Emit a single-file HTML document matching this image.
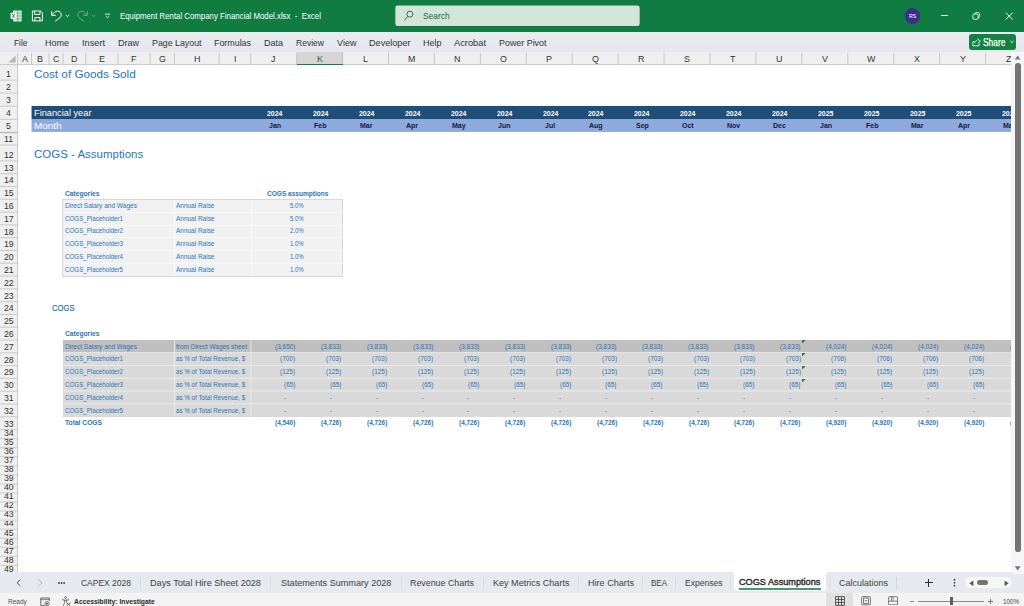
<!DOCTYPE html>
<html><head><meta charset="utf-8"><title>Excel</title>
<style>
html,body{margin:0;padding:0;background:#fff;}
body{width:1024px;height:606px;overflow:hidden;position:relative;font-family:"Liberation Sans",sans-serif;}
#r{position:absolute;left:0;top:0;width:1024px;height:606px;overflow:hidden;}
#r div,#r span,#r svg{position:absolute;}
#r span{white-space:pre;transform-origin:0 50%;}
</style></head><body><div id="r">
<div style="left:0.00px;top:0.00px;width:1024.00px;height:32.00px;background:#107c41;"></div>
<svg style="left:390px;top:0" width="256" height="32" viewBox="390 0 256 32"><rect x="395.3" y="5.9" width="244.4" height="20.6" rx="2.4" fill="#0d6b38"/><rect x="395.3" y="5.5" width="244.4" height="20.6" rx="2.4" fill="#d2e5d9"/></svg>
<span style="left:422.80px;top:9.84px;font-size:9.6px;line-height:11.52px;color:#21693f;transform:scaleX(0.8746);">Search</span>
<span style="left:120.00px;top:10.24px;font-size:9.6px;line-height:11.52px;color:#ffffff;transform:scaleX(0.8154);">Equipment Rental Company Financial Model.xlsx  -  Excel</span>
<div style="left:904.60px;top:8.00px;width:15.80px;height:15.80px;background:#3e2f86;border-radius:50%;"></div>
<span style="left:909.00px;top:12.38px;font-size:6.2px;line-height:7.44px;color:#ffffff;transform:scaleX(0.8475);">RS</span>
<div style="left:0.00px;top:32.00px;width:1024.00px;height:19.90px;background:linear-gradient(#e9ebf1,#e5e7ed);"></div>
<span style="left:14.00px;top:37.02px;font-size:9.8px;line-height:11.76px;color:#333333;transform:scaleX(0.8550);">File</span>
<span style="left:45.00px;top:37.02px;font-size:9.8px;line-height:11.76px;color:#333333;transform:scaleX(0.9181);">Home</span>
<span style="left:82.00px;top:37.02px;font-size:9.8px;line-height:11.76px;color:#333333;transform:scaleX(0.9385);">Insert</span>
<span style="left:117.50px;top:37.02px;font-size:9.8px;line-height:11.76px;color:#333333;transform:scaleX(0.9183);">Draw</span>
<span style="left:151.50px;top:37.02px;font-size:9.8px;line-height:11.76px;color:#333333;transform:scaleX(0.8995);">Page Layout</span>
<span style="left:214.00px;top:37.02px;font-size:9.8px;line-height:11.76px;color:#333333;transform:scaleX(0.9060);">Formulas</span>
<span style="left:263.50px;top:37.02px;font-size:9.8px;line-height:11.76px;color:#333333;transform:scaleX(0.9179);">Data</span>
<span style="left:295.50px;top:37.02px;font-size:9.8px;line-height:11.76px;color:#333333;transform:scaleX(0.8714);">Review</span>
<span style="left:336.50px;top:37.02px;font-size:9.8px;line-height:11.76px;color:#333333;transform:scaleX(0.9258);">View</span>
<span style="left:368.50px;top:37.02px;font-size:9.8px;line-height:11.76px;color:#333333;transform:scaleX(0.9291);">Developer</span>
<span style="left:422.50px;top:37.02px;font-size:9.8px;line-height:11.76px;color:#333333;transform:scaleX(0.9179);">Help</span>
<span style="left:454.00px;top:37.02px;font-size:9.8px;line-height:11.76px;color:#333333;transform:scaleX(0.9475);">Acrobat</span>
<span style="left:498.50px;top:37.02px;font-size:9.8px;line-height:11.76px;color:#333333;transform:scaleX(0.9085);">Power Pivot</span>
<div style="left:969.00px;top:34.20px;width:47.40px;height:15.60px;background:#15803f;border-radius:3px;"></div>
<span style="-webkit-text-stroke:0.25px #fff;left:983.20px;top:35.94px;font-size:10.6px;line-height:12.72px;color:#ffffff;transform:scaleX(0.7920);">Share</span>
<div style="left:0.00px;top:51.90px;width:1024.00px;height:520.40px;background:#ffffff;"></div>
<div style="left:0.00px;top:51.90px;width:1010.80px;height:12.70px;background:#efefef;"></div>
<div style="left:296.93px;top:51.90px;width:45.93px;height:12.70px;background:#d5d5d5;"></div>
<span style="left:21.58px;top:52.76px;font-size:9.9px;line-height:11.88px;color:#333333;transform:scaleX(0.9000);">A</span>
<span style="left:37.33px;top:52.76px;font-size:9.9px;line-height:11.88px;color:#333333;transform:scaleX(0.9000);">B</span>
<span style="left:52.88px;top:52.76px;font-size:9.9px;line-height:11.88px;color:#333333;transform:scaleX(0.9000);">C</span>
<span style="left:71.18px;top:52.76px;font-size:9.9px;line-height:11.88px;color:#333333;transform:scaleX(0.9000);">D</span>
<span style="left:98.83px;top:52.76px;font-size:9.9px;line-height:11.88px;color:#333333;transform:scaleX(0.9000);">E</span>
<span style="left:131.28px;top:52.76px;font-size:9.9px;line-height:11.88px;color:#333333;transform:scaleX(0.9000);">F</span>
<span style="left:158.78px;top:52.76px;font-size:9.9px;line-height:11.88px;color:#333333;transform:scaleX(0.9000);">G</span>
<span style="left:193.58px;top:52.76px;font-size:9.9px;line-height:11.88px;color:#333333;transform:scaleX(0.9000);">H</span>
<span style="left:233.71px;top:52.76px;font-size:9.9px;line-height:11.88px;color:#333333;transform:scaleX(0.9000);">I</span>
<span style="left:271.44px;top:52.76px;font-size:9.9px;line-height:11.88px;color:#333333;transform:scaleX(0.9000);">J</span>
<span style="left:316.62px;top:52.76px;font-size:9.9px;line-height:11.88px;color:#1e6a3c;transform:scaleX(0.9000);">K</span>
<span style="left:363.05px;top:52.76px;font-size:9.9px;line-height:11.88px;color:#333333;transform:scaleX(0.9000);">L</span>
<span style="left:407.74px;top:52.76px;font-size:9.9px;line-height:11.88px;color:#333333;transform:scaleX(0.9000);">M</span>
<span style="left:454.17px;top:52.76px;font-size:9.9px;line-height:11.88px;color:#333333;transform:scaleX(0.9000);">N</span>
<span style="left:499.85px;top:52.76px;font-size:9.9px;line-height:11.88px;color:#333333;transform:scaleX(0.9000);">O</span>
<span style="left:546.27px;top:52.76px;font-size:9.9px;line-height:11.88px;color:#333333;transform:scaleX(0.9000);">P</span>
<span style="left:591.71px;top:52.76px;font-size:9.9px;line-height:11.88px;color:#333333;transform:scaleX(0.9000);">Q</span>
<span style="left:637.89px;top:52.76px;font-size:9.9px;line-height:11.88px;color:#333333;transform:scaleX(0.9000);">R</span>
<span style="left:684.06px;top:52.76px;font-size:9.9px;line-height:11.88px;color:#333333;transform:scaleX(0.9000);">S</span>
<span style="left:730.24px;top:52.76px;font-size:9.9px;line-height:11.88px;color:#333333;transform:scaleX(0.9000);">T</span>
<span style="left:775.68px;top:52.76px;font-size:9.9px;line-height:11.88px;color:#333333;transform:scaleX(0.9000);">U</span>
<span style="left:821.85px;top:52.76px;font-size:9.9px;line-height:11.88px;color:#333333;transform:scaleX(0.9000);">V</span>
<span style="left:866.55px;top:52.76px;font-size:9.9px;line-height:11.88px;color:#333333;transform:scaleX(0.9000);">W</span>
<span style="left:913.71px;top:52.76px;font-size:9.9px;line-height:11.88px;color:#333333;transform:scaleX(0.9000);">X</span>
<span style="left:959.64px;top:52.76px;font-size:9.9px;line-height:11.88px;color:#333333;transform:scaleX(0.9000);">Y</span>
<span style="left:1005.82px;top:52.76px;font-size:9.9px;line-height:11.88px;color:#333333;transform:scaleX(0.9000);">Z</span>
<div style="left:0.00px;top:64.60px;width:17.60px;height:507.70px;background:#efefef;"></div>
<span style="left:6.07px;top:68.08px;font-size:9.7px;line-height:11.64px;color:#333333;transform:scaleX(0.9000);">1</span>
<span style="left:6.07px;top:81.08px;font-size:9.7px;line-height:11.64px;color:#333333;transform:scaleX(0.9000);">2</span>
<span style="left:6.07px;top:94.18px;font-size:9.7px;line-height:11.64px;color:#333333;transform:scaleX(0.9000);">3</span>
<span style="left:6.07px;top:107.38px;font-size:9.7px;line-height:11.64px;color:#333333;transform:scaleX(0.9000);">4</span>
<span style="left:6.07px;top:120.38px;font-size:9.7px;line-height:11.64px;color:#333333;transform:scaleX(0.9000);">5</span>
<span style="left:3.97px;top:132.98px;font-size:9.7px;line-height:11.64px;color:#333333;transform:scaleX(0.9000);">11</span>
<span style="left:3.65px;top:148.88px;font-size:9.7px;line-height:11.64px;color:#333333;transform:scaleX(0.9000);">12</span>
<span style="left:3.65px;top:161.68px;font-size:9.7px;line-height:11.64px;color:#333333;transform:scaleX(0.9000);">13</span>
<span style="left:3.65px;top:174.47px;font-size:9.7px;line-height:11.64px;color:#333333;transform:scaleX(0.9000);">14</span>
<span style="left:3.65px;top:187.27px;font-size:9.7px;line-height:11.64px;color:#333333;transform:scaleX(0.9000);">15</span>
<span style="left:3.65px;top:200.06px;font-size:9.7px;line-height:11.64px;color:#333333;transform:scaleX(0.9000);">16</span>
<span style="left:3.65px;top:212.86px;font-size:9.7px;line-height:11.64px;color:#333333;transform:scaleX(0.9000);">17</span>
<span style="left:3.65px;top:225.65px;font-size:9.7px;line-height:11.64px;color:#333333;transform:scaleX(0.9000);">18</span>
<span style="left:3.65px;top:238.45px;font-size:9.7px;line-height:11.64px;color:#333333;transform:scaleX(0.9000);">19</span>
<span style="left:3.65px;top:251.24px;font-size:9.7px;line-height:11.64px;color:#333333;transform:scaleX(0.9000);">20</span>
<span style="left:3.65px;top:264.04px;font-size:9.7px;line-height:11.64px;color:#333333;transform:scaleX(0.9000);">21</span>
<span style="left:3.65px;top:276.83px;font-size:9.7px;line-height:11.64px;color:#333333;transform:scaleX(0.9000);">22</span>
<span style="left:3.65px;top:289.62px;font-size:9.7px;line-height:11.64px;color:#333333;transform:scaleX(0.9000);">23</span>
<span style="left:3.65px;top:302.42px;font-size:9.7px;line-height:11.64px;color:#333333;transform:scaleX(0.9000);">24</span>
<span style="left:3.65px;top:315.22px;font-size:9.7px;line-height:11.64px;color:#333333;transform:scaleX(0.9000);">25</span>
<span style="left:3.65px;top:328.01px;font-size:9.7px;line-height:11.64px;color:#333333;transform:scaleX(0.9000);">26</span>
<span style="left:3.65px;top:340.81px;font-size:9.7px;line-height:11.64px;color:#333333;transform:scaleX(0.9000);">27</span>
<span style="left:3.65px;top:353.60px;font-size:9.7px;line-height:11.64px;color:#333333;transform:scaleX(0.9000);">28</span>
<span style="left:3.65px;top:366.39px;font-size:9.7px;line-height:11.64px;color:#333333;transform:scaleX(0.9000);">29</span>
<span style="left:3.65px;top:379.19px;font-size:9.7px;line-height:11.64px;color:#333333;transform:scaleX(0.9000);">30</span>
<span style="left:3.65px;top:391.99px;font-size:9.7px;line-height:11.64px;color:#333333;transform:scaleX(0.9000);">31</span>
<span style="left:3.65px;top:404.78px;font-size:9.7px;line-height:11.64px;color:#333333;transform:scaleX(0.9000);">32</span>
<span style="left:3.65px;top:417.58px;font-size:9.7px;line-height:11.64px;color:#333333;transform:scaleX(0.9000);">33</span>
<div style="left:0;top:430.00px;width:17.60px;height:8.56px;overflow:hidden;">
<span style="left:3.65px;top:-3.16px;font-size:9.7px;line-height:11.64px;color:#333;transform:scaleX(0.9);">34</span></div>
<div style="left:0;top:438.96px;width:17.60px;height:8.66px;overflow:hidden;">
<span style="left:3.65px;top:-3.06px;font-size:9.7px;line-height:11.64px;color:#333;transform:scaleX(0.9);">35</span></div>
<div style="left:0;top:448.02px;width:17.60px;height:8.66px;overflow:hidden;">
<span style="left:3.65px;top:-3.06px;font-size:9.7px;line-height:11.64px;color:#333;transform:scaleX(0.9);">36</span></div>
<div style="left:0;top:457.08px;width:17.60px;height:8.66px;overflow:hidden;">
<span style="left:3.65px;top:-3.06px;font-size:9.7px;line-height:11.64px;color:#333;transform:scaleX(0.9);">37</span></div>
<div style="left:0;top:466.14px;width:17.60px;height:8.66px;overflow:hidden;">
<span style="left:3.65px;top:-3.06px;font-size:9.7px;line-height:11.64px;color:#333;transform:scaleX(0.9);">38</span></div>
<div style="left:0;top:475.20px;width:17.60px;height:8.66px;overflow:hidden;">
<span style="left:3.65px;top:-3.06px;font-size:9.7px;line-height:11.64px;color:#333;transform:scaleX(0.9);">39</span></div>
<div style="left:0;top:484.26px;width:17.60px;height:8.66px;overflow:hidden;">
<span style="left:3.65px;top:-3.06px;font-size:9.7px;line-height:11.64px;color:#333;transform:scaleX(0.9);">40</span></div>
<div style="left:0;top:493.32px;width:17.60px;height:8.66px;overflow:hidden;">
<span style="left:3.65px;top:-3.06px;font-size:9.7px;line-height:11.64px;color:#333;transform:scaleX(0.9);">41</span></div>
<div style="left:0;top:502.38px;width:17.60px;height:8.66px;overflow:hidden;">
<span style="left:3.65px;top:-3.06px;font-size:9.7px;line-height:11.64px;color:#333;transform:scaleX(0.9);">42</span></div>
<div style="left:0;top:511.44px;width:17.60px;height:8.66px;overflow:hidden;">
<span style="left:3.65px;top:-3.06px;font-size:9.7px;line-height:11.64px;color:#333;transform:scaleX(0.9);">43</span></div>
<div style="left:0;top:520.50px;width:17.60px;height:8.66px;overflow:hidden;">
<span style="left:3.65px;top:-3.06px;font-size:9.7px;line-height:11.64px;color:#333;transform:scaleX(0.9);">44</span></div>
<div style="left:0;top:529.56px;width:17.60px;height:8.66px;overflow:hidden;">
<span style="left:3.65px;top:-3.06px;font-size:9.7px;line-height:11.64px;color:#333;transform:scaleX(0.9);">45</span></div>
<div style="left:0;top:538.62px;width:17.60px;height:8.66px;overflow:hidden;">
<span style="left:3.65px;top:-3.06px;font-size:9.7px;line-height:11.64px;color:#333;transform:scaleX(0.9);">46</span></div>
<div style="left:0;top:547.68px;width:17.60px;height:8.66px;overflow:hidden;">
<span style="left:3.65px;top:-3.06px;font-size:9.7px;line-height:11.64px;color:#333;transform:scaleX(0.9);">47</span></div>
<div style="left:0;top:556.74px;width:17.60px;height:8.66px;overflow:hidden;">
<span style="left:3.65px;top:-3.06px;font-size:9.7px;line-height:11.64px;color:#333;transform:scaleX(0.9);">48</span></div>
<div style="left:0;top:565.80px;width:17.60px;height:6.50px;overflow:hidden;">
<span style="left:3.65px;top:-3.06px;font-size:9.7px;line-height:11.64px;color:#333;transform:scaleX(0.9);">49</span></div>
<svg style="left:8.2px;top:54.6px" width="8" height="8" viewBox="0 0 8 8"><path d="M7.6 0.4V7.6H0.4Z" fill="#b5b5b5"/></svg>
<svg style="left:0;top:0" width="1024" height="606" viewBox="0 0 1024 606"><path d="M17.60 52.90V572.30" stroke="#c6c6c6" stroke-width="0.9"/><path d="M0 64.60H1010.80" stroke="#c6c6c6" stroke-width="0.9"/><path d="M31.50 52.70V64.60" stroke="#c2c2c2" stroke-width="0.9"/><path d="M49.10 52.70V64.60" stroke="#c2c2c2" stroke-width="0.9"/><path d="M63.10 52.70V64.60" stroke="#c2c2c2" stroke-width="0.9"/><path d="M85.70 52.70V64.60" stroke="#c2c2c2" stroke-width="0.9"/><path d="M117.90 52.70V64.60" stroke="#c2c2c2" stroke-width="0.9"/><path d="M150.10 52.70V64.60" stroke="#c2c2c2" stroke-width="0.9"/><path d="M174.40 52.70V64.60" stroke="#c2c2c2" stroke-width="0.9"/><path d="M219.20 52.70V64.60" stroke="#c2c2c2" stroke-width="0.9"/><path d="M250.70 52.70V64.60" stroke="#c2c2c2" stroke-width="0.9"/><path d="M296.63 52.70V64.60" stroke="#c2c2c2" stroke-width="0.9"/><path d="M342.56 52.70V64.60" stroke="#c2c2c2" stroke-width="0.9"/><path d="M388.49 52.70V64.60" stroke="#c2c2c2" stroke-width="0.9"/><path d="M434.42 52.70V64.60" stroke="#c2c2c2" stroke-width="0.9"/><path d="M480.35 52.70V64.60" stroke="#c2c2c2" stroke-width="0.9"/><path d="M526.28 52.70V64.60" stroke="#c2c2c2" stroke-width="0.9"/><path d="M572.21 52.70V64.60" stroke="#c2c2c2" stroke-width="0.9"/><path d="M618.14 52.70V64.60" stroke="#c2c2c2" stroke-width="0.9"/><path d="M664.07 52.70V64.60" stroke="#c2c2c2" stroke-width="0.9"/><path d="M710.00 52.70V64.60" stroke="#c2c2c2" stroke-width="0.9"/><path d="M755.93 52.70V64.60" stroke="#c2c2c2" stroke-width="0.9"/><path d="M801.86 52.70V64.60" stroke="#c2c2c2" stroke-width="0.9"/><path d="M847.79 52.70V64.60" stroke="#c2c2c2" stroke-width="0.9"/><path d="M893.72 52.70V64.60" stroke="#c2c2c2" stroke-width="0.9"/><path d="M939.65 52.70V64.60" stroke="#c2c2c2" stroke-width="0.9"/><path d="M985.58 52.70V64.60" stroke="#c2c2c2" stroke-width="0.9"/><path d="M297.03 64.50H342.96" stroke="#107c41" stroke-width="1.2"/><path d="M0 80.10H17.60" stroke="#c6c6c6" stroke-width="0.9"/><path d="M0 93.10H17.60" stroke="#c6c6c6" stroke-width="0.9"/><path d="M0 106.20H17.60" stroke="#c6c6c6" stroke-width="0.9"/><path d="M0 119.40H17.60" stroke="#c6c6c6" stroke-width="0.9"/><path d="M0 132.50H17.60" stroke="#bdbdbd" stroke-width="1.5"/><path d="M0 145.00H17.60" stroke="#c6c6c6" stroke-width="0.9"/><path d="M0 160.90H17.60" stroke="#c6c6c6" stroke-width="0.9"/><path d="M0 173.69H17.60" stroke="#c6c6c6" stroke-width="0.9"/><path d="M0 186.49H17.60" stroke="#c6c6c6" stroke-width="0.9"/><path d="M0 199.28H17.60" stroke="#c6c6c6" stroke-width="0.9"/><path d="M0 212.08H17.60" stroke="#c6c6c6" stroke-width="0.9"/><path d="M0 224.88H17.60" stroke="#c6c6c6" stroke-width="0.9"/><path d="M0 237.67H17.60" stroke="#c6c6c6" stroke-width="0.9"/><path d="M0 250.47H17.60" stroke="#c6c6c6" stroke-width="0.9"/><path d="M0 263.26H17.60" stroke="#c6c6c6" stroke-width="0.9"/><path d="M0 276.06H17.60" stroke="#c6c6c6" stroke-width="0.9"/><path d="M0 288.85H17.60" stroke="#c6c6c6" stroke-width="0.9"/><path d="M0 301.64H17.60" stroke="#c6c6c6" stroke-width="0.9"/><path d="M0 314.44H17.60" stroke="#c6c6c6" stroke-width="0.9"/><path d="M0 327.24H17.60" stroke="#c6c6c6" stroke-width="0.9"/><path d="M0 340.03H17.60" stroke="#c6c6c6" stroke-width="0.9"/><path d="M0 352.83H17.60" stroke="#c6c6c6" stroke-width="0.9"/><path d="M0 365.62H17.60" stroke="#c6c6c6" stroke-width="0.9"/><path d="M0 378.41H17.60" stroke="#c6c6c6" stroke-width="0.9"/><path d="M0 391.21H17.60" stroke="#c6c6c6" stroke-width="0.9"/><path d="M0 404.00H17.60" stroke="#c6c6c6" stroke-width="0.9"/><path d="M0 416.80H17.60" stroke="#c6c6c6" stroke-width="0.9"/><path d="M0 429.60H17.60" stroke="#c6c6c6" stroke-width="0.9"/><path d="M0 438.56H17.60" stroke="#c6c6c6" stroke-width="0.9"/><path d="M0 447.62H17.60" stroke="#c6c6c6" stroke-width="0.9"/><path d="M0 456.68H17.60" stroke="#c6c6c6" stroke-width="0.9"/><path d="M0 465.74H17.60" stroke="#c6c6c6" stroke-width="0.9"/><path d="M0 474.80H17.60" stroke="#c6c6c6" stroke-width="0.9"/><path d="M0 483.86H17.60" stroke="#c6c6c6" stroke-width="0.9"/><path d="M0 492.92H17.60" stroke="#c6c6c6" stroke-width="0.9"/><path d="M0 501.98H17.60" stroke="#c6c6c6" stroke-width="0.9"/><path d="M0 511.04H17.60" stroke="#c6c6c6" stroke-width="0.9"/><path d="M0 520.10H17.60" stroke="#c6c6c6" stroke-width="0.9"/><path d="M0 529.16H17.60" stroke="#c6c6c6" stroke-width="0.9"/><path d="M0 538.22H17.60" stroke="#c6c6c6" stroke-width="0.9"/><path d="M0 547.28H17.60" stroke="#c6c6c6" stroke-width="0.9"/><path d="M0 556.34H17.60" stroke="#c6c6c6" stroke-width="0.9"/><path d="M0 565.40H17.60" stroke="#c6c6c6" stroke-width="0.9"/></svg>
<span style="left:34.30px;top:66.92px;font-size:11.8px;line-height:14.16px;color:#2176c0;transform:scaleX(0.9940);">Cost of Goods Sold</span>
<svg style="left:0;top:100px" width="1024" height="36" viewBox="0 100 1024 36"><rect x="31.55" y="105.95" width="981.25" height="13.1" fill="#1f4e79"/><rect x="31.55" y="119.0" width="981.25" height="12.9" fill="#8ea9db"/></svg>
<span style="left:34.00px;top:107.54px;font-size:8.6px;line-height:10.32px;color:#ffffff;transform:scaleX(1.0741);">Financial year</span>
<span style="left:34.00px;top:120.84px;font-size:8.6px;line-height:10.32px;color:#ffffff;transform:scaleX(1.1548);">Month</span>
<span style="left:266.93px;top:109.76px;font-size:7.4px;line-height:8.88px;color:#ffffff;transform:scaleX(0.9400);font-weight:bold;">2024</span>
<span style="left:268.61px;top:122.46px;font-size:7.4px;line-height:8.88px;color:#14203c;transform:scaleX(0.9500);font-weight:bold;">Jan</span>
<span style="left:312.86px;top:109.76px;font-size:7.4px;line-height:8.88px;color:#ffffff;transform:scaleX(0.9400);font-weight:bold;">2024</span>
<span style="left:314.35px;top:122.46px;font-size:7.4px;line-height:8.88px;color:#14203c;transform:scaleX(0.9500);font-weight:bold;">Feb</span>
<span style="left:358.79px;top:109.76px;font-size:7.4px;line-height:8.88px;color:#ffffff;transform:scaleX(0.9400);font-weight:bold;">2024</span>
<span style="left:360.27px;top:122.46px;font-size:7.4px;line-height:8.88px;color:#14203c;transform:scaleX(0.9500);font-weight:bold;">Mar</span>
<span style="left:404.72px;top:109.76px;font-size:7.4px;line-height:8.88px;color:#ffffff;transform:scaleX(0.9400);font-weight:bold;">2024</span>
<span style="left:406.40px;top:122.46px;font-size:7.4px;line-height:8.88px;color:#14203c;transform:scaleX(0.9500);font-weight:bold;">Apr</span>
<span style="left:450.65px;top:109.76px;font-size:7.4px;line-height:8.88px;color:#ffffff;transform:scaleX(0.9400);font-weight:bold;">2024</span>
<span style="left:451.55px;top:122.46px;font-size:7.4px;line-height:8.88px;color:#14203c;transform:scaleX(0.9500);font-weight:bold;">May</span>
<span style="left:496.58px;top:109.76px;font-size:7.4px;line-height:8.88px;color:#ffffff;transform:scaleX(0.9400);font-weight:bold;">2024</span>
<span style="left:498.07px;top:122.46px;font-size:7.4px;line-height:8.88px;color:#14203c;transform:scaleX(0.9500);font-weight:bold;">Jun</span>
<span style="left:542.51px;top:109.76px;font-size:7.4px;line-height:8.88px;color:#ffffff;transform:scaleX(0.9400);font-weight:bold;">2024</span>
<span style="left:545.17px;top:122.46px;font-size:7.4px;line-height:8.88px;color:#14203c;transform:scaleX(0.9500);font-weight:bold;">Jul</span>
<span style="left:588.44px;top:109.76px;font-size:7.4px;line-height:8.88px;color:#ffffff;transform:scaleX(0.9400);font-weight:bold;">2024</span>
<span style="left:589.34px;top:122.46px;font-size:7.4px;line-height:8.88px;color:#14203c;transform:scaleX(0.9500);font-weight:bold;">Aug</span>
<span style="left:634.37px;top:109.76px;font-size:7.4px;line-height:8.88px;color:#ffffff;transform:scaleX(0.9400);font-weight:bold;">2024</span>
<span style="left:635.66px;top:122.46px;font-size:7.4px;line-height:8.88px;color:#14203c;transform:scaleX(0.9500);font-weight:bold;">Sep</span>
<span style="left:680.30px;top:109.76px;font-size:7.4px;line-height:8.88px;color:#ffffff;transform:scaleX(0.9400);font-weight:bold;">2024</span>
<span style="left:682.18px;top:122.46px;font-size:7.4px;line-height:8.88px;color:#14203c;transform:scaleX(0.9500);font-weight:bold;">Oct</span>
<span style="left:726.23px;top:109.76px;font-size:7.4px;line-height:8.88px;color:#ffffff;transform:scaleX(0.9400);font-weight:bold;">2024</span>
<span style="left:727.32px;top:122.46px;font-size:7.4px;line-height:8.88px;color:#14203c;transform:scaleX(0.9500);font-weight:bold;">Nov</span>
<span style="left:772.16px;top:109.76px;font-size:7.4px;line-height:8.88px;color:#ffffff;transform:scaleX(0.9400);font-weight:bold;">2024</span>
<span style="left:773.45px;top:122.46px;font-size:7.4px;line-height:8.88px;color:#14203c;transform:scaleX(0.9500);font-weight:bold;">Dec</span>
<span style="left:818.09px;top:109.76px;font-size:7.4px;line-height:8.88px;color:#ffffff;transform:scaleX(0.9400);font-weight:bold;">2025</span>
<span style="left:819.77px;top:122.46px;font-size:7.4px;line-height:8.88px;color:#14203c;transform:scaleX(0.9500);font-weight:bold;">Jan</span>
<span style="left:864.02px;top:109.76px;font-size:7.4px;line-height:8.88px;color:#ffffff;transform:scaleX(0.9400);font-weight:bold;">2025</span>
<span style="left:865.51px;top:122.46px;font-size:7.4px;line-height:8.88px;color:#14203c;transform:scaleX(0.9500);font-weight:bold;">Feb</span>
<span style="left:909.95px;top:109.76px;font-size:7.4px;line-height:8.88px;color:#ffffff;transform:scaleX(0.9400);font-weight:bold;">2025</span>
<span style="left:911.43px;top:122.46px;font-size:7.4px;line-height:8.88px;color:#14203c;transform:scaleX(0.9500);font-weight:bold;">Mar</span>
<span style="left:955.88px;top:109.76px;font-size:7.4px;line-height:8.88px;color:#ffffff;transform:scaleX(0.9400);font-weight:bold;">2025</span>
<span style="left:957.56px;top:122.46px;font-size:7.4px;line-height:8.88px;color:#14203c;transform:scaleX(0.9500);font-weight:bold;">Apr</span>
<span style="left:1001.81px;top:109.76px;font-size:7.4px;line-height:8.88px;color:#ffffff;transform:scaleX(0.9400);font-weight:bold;">2025</span>
<span style="left:1002.71px;top:122.46px;font-size:7.4px;line-height:8.88px;color:#14203c;transform:scaleX(0.9500);font-weight:bold;">May</span>
<span style="left:34.30px;top:146.82px;font-size:11.8px;line-height:14.16px;color:#2176c0;transform:scaleX(0.9739);">COGS - Assumptions</span>
<span style="left:64.50px;top:189.73px;font-size:6.6px;line-height:7.92px;color:#2b76b9;transform:scaleX(1.0114);font-weight:bold;">Categories</span>
<span style="left:266.50px;top:189.73px;font-size:6.6px;line-height:7.92px;color:#2b76b9;transform:scaleX(0.9923);font-weight:bold;">COGS assumptions</span>
<div style="left:63.30px;top:199.69px;width:279.00px;height:75.92px;background:#f1f1f1;outline:0.8px solid #d8d8d8;"></div>
<div style="left:63.10px;top:211.88px;width:279.90px;height:0.80px;background:#f8f8f8;"></div>
<div style="left:63.10px;top:224.68px;width:279.90px;height:0.80px;background:#f8f8f8;"></div>
<div style="left:63.10px;top:237.47px;width:279.90px;height:0.80px;background:#f8f8f8;"></div>
<div style="left:63.10px;top:250.27px;width:279.90px;height:0.80px;background:#f8f8f8;"></div>
<div style="left:63.10px;top:263.06px;width:279.90px;height:0.80px;background:#f8f8f8;"></div>
<div style="left:174.20px;top:199.69px;width:0.80px;height:75.92px;background:#f8f8f8;"></div>
<div style="left:250.50px;top:199.69px;width:0.80px;height:75.92px;background:#f8f8f8;"></div>
<span style="left:64.50px;top:201.82px;font-size:6.6px;line-height:7.92px;color:#2b76b9;transform:scaleX(0.9897);">Direct Salary and Wages</span>
<span style="left:175.50px;top:201.82px;font-size:6.6px;line-height:7.92px;color:#2b76b9;transform:scaleX(0.9807);">Annual Raise</span>
<span style="left:290.30px;top:201.82px;font-size:6.6px;line-height:7.92px;color:#2b76b9;transform:scaleX(0.9107);">5.0%</span>
<span style="left:64.50px;top:214.62px;font-size:6.6px;line-height:7.92px;color:#2b76b9;transform:scaleX(0.9411);">COGS_Placeholder1</span>
<span style="left:175.50px;top:214.62px;font-size:6.6px;line-height:7.92px;color:#2b76b9;transform:scaleX(0.9807);">Annual Raise</span>
<span style="left:290.30px;top:214.62px;font-size:6.6px;line-height:7.92px;color:#2b76b9;transform:scaleX(0.9107);">5.0%</span>
<span style="left:64.50px;top:227.41px;font-size:6.6px;line-height:7.92px;color:#2b76b9;transform:scaleX(0.9411);">COGS_Placeholder2</span>
<span style="left:175.50px;top:227.41px;font-size:6.6px;line-height:7.92px;color:#2b76b9;transform:scaleX(0.9807);">Annual Raise</span>
<span style="left:290.30px;top:227.41px;font-size:6.6px;line-height:7.92px;color:#2b76b9;transform:scaleX(0.9107);">2.0%</span>
<span style="left:64.50px;top:240.21px;font-size:6.6px;line-height:7.92px;color:#2b76b9;transform:scaleX(0.9411);">COGS_Placeholder3</span>
<span style="left:175.50px;top:240.21px;font-size:6.6px;line-height:7.92px;color:#2b76b9;transform:scaleX(0.9807);">Annual Raise</span>
<span style="left:290.30px;top:240.21px;font-size:6.6px;line-height:7.92px;color:#2b76b9;transform:scaleX(0.9107);">1.0%</span>
<span style="left:64.50px;top:253.00px;font-size:6.6px;line-height:7.92px;color:#2b76b9;transform:scaleX(0.9411);">COGS_Placeholder4</span>
<span style="left:175.50px;top:253.00px;font-size:6.6px;line-height:7.92px;color:#2b76b9;transform:scaleX(0.9807);">Annual Raise</span>
<span style="left:290.30px;top:253.00px;font-size:6.6px;line-height:7.92px;color:#2b76b9;transform:scaleX(0.9107);">1.0%</span>
<span style="left:64.50px;top:265.80px;font-size:6.6px;line-height:7.92px;color:#2b76b9;transform:scaleX(0.9411);">COGS_Placeholder5</span>
<span style="left:175.50px;top:265.80px;font-size:6.6px;line-height:7.92px;color:#2b76b9;transform:scaleX(0.9807);">Annual Raise</span>
<span style="left:290.30px;top:265.80px;font-size:6.6px;line-height:7.92px;color:#2b76b9;transform:scaleX(0.9107);">1.0%</span>
<span style="-webkit-text-stroke:0.2px #2577bd;left:51.50px;top:303.12px;font-size:8.7px;line-height:10.44px;color:#2176c0;transform:scaleX(0.8782);">COGS</span>
<span style="left:64.50px;top:330.47px;font-size:6.6px;line-height:7.92px;color:#2b76b9;transform:scaleX(1.0114);font-weight:bold;">Categories</span>
<div style="left:63.10px;top:340.13px;width:947.70px;height:13.10px;background:#bfbfbf;"></div>
<div style="left:63.10px;top:352.93px;width:947.70px;height:13.09px;background:#d9d9d9;"></div>
<div style="left:63.10px;top:365.72px;width:947.70px;height:13.09px;background:#d9d9d9;"></div>
<div style="left:63.10px;top:378.51px;width:947.70px;height:13.10px;background:#d9d9d9;"></div>
<div style="left:63.10px;top:391.31px;width:947.70px;height:13.09px;background:#d9d9d9;"></div>
<div style="left:63.10px;top:404.11px;width:947.70px;height:13.10px;background:#d9d9d9;"></div>
<svg style="left:0;top:0" width="1024" height="606" viewBox="0 0 1024 606"><path d="M63.1 352.63H1010.8" stroke="#ededed" stroke-width="0.9"/><path d="M63.1 365.42H1010.8" stroke="#ededed" stroke-width="0.9"/><path d="M63.1 378.21H1010.8" stroke="#ededed" stroke-width="0.9"/><path d="M63.1 391.01H1010.8" stroke="#ededed" stroke-width="0.9"/><path d="M63.1 403.81H1010.8" stroke="#ededed" stroke-width="0.9"/><path d="M174.5 340.13V416.90M250.9 340.13V416.90" stroke="#ececec" stroke-width="0.9"/></svg>
<span style="left:64.50px;top:342.57px;font-size:6.6px;line-height:7.92px;color:#2b76b9;transform:scaleX(0.9897);">Direct Salary and Wages</span>
<span style="left:175.80px;top:342.57px;font-size:6.6px;line-height:7.92px;color:#2b76b9;transform:scaleX(0.9810);">from Direct Wages sheet</span>
<span style="left:274.94px;top:342.57px;font-size:6.6px;line-height:7.92px;color:#2b76b9;transform:scaleX(0.9800);">(3,650)</span>
<span style="left:320.87px;top:342.57px;font-size:6.6px;line-height:7.92px;color:#2b76b9;transform:scaleX(0.9800);">(3,833)</span>
<span style="left:366.80px;top:342.57px;font-size:6.6px;line-height:7.92px;color:#2b76b9;transform:scaleX(0.9800);">(3,833)</span>
<span style="left:412.73px;top:342.57px;font-size:6.6px;line-height:7.92px;color:#2b76b9;transform:scaleX(0.9800);">(3,833)</span>
<span style="left:458.66px;top:342.57px;font-size:6.6px;line-height:7.92px;color:#2b76b9;transform:scaleX(0.9800);">(3,833)</span>
<span style="left:504.59px;top:342.57px;font-size:6.6px;line-height:7.92px;color:#2b76b9;transform:scaleX(0.9800);">(3,833)</span>
<span style="left:550.52px;top:342.57px;font-size:6.6px;line-height:7.92px;color:#2b76b9;transform:scaleX(0.9800);">(3,833)</span>
<span style="left:596.45px;top:342.57px;font-size:6.6px;line-height:7.92px;color:#2b76b9;transform:scaleX(0.9800);">(3,833)</span>
<span style="left:642.38px;top:342.57px;font-size:6.6px;line-height:7.92px;color:#2b76b9;transform:scaleX(0.9800);">(3,833)</span>
<span style="left:688.31px;top:342.57px;font-size:6.6px;line-height:7.92px;color:#2b76b9;transform:scaleX(0.9800);">(3,833)</span>
<span style="left:734.24px;top:342.57px;font-size:6.6px;line-height:7.92px;color:#2b76b9;transform:scaleX(0.9800);">(3,833)</span>
<span style="left:780.17px;top:342.57px;font-size:6.6px;line-height:7.92px;color:#2b76b9;transform:scaleX(0.9800);">(3,833)</span>
<span style="left:826.10px;top:342.57px;font-size:6.6px;line-height:7.92px;color:#2b76b9;transform:scaleX(0.9800);">(4,024)</span>
<span style="left:872.03px;top:342.57px;font-size:6.6px;line-height:7.92px;color:#2b76b9;transform:scaleX(0.9800);">(4,024)</span>
<span style="left:917.96px;top:342.57px;font-size:6.6px;line-height:7.92px;color:#2b76b9;transform:scaleX(0.9800);">(4,024)</span>
<span style="left:963.89px;top:342.57px;font-size:6.6px;line-height:7.92px;color:#2b76b9;transform:scaleX(0.9800);">(4,024)</span>
<span style="left:1009.82px;top:342.57px;font-size:6.6px;line-height:7.92px;color:#2b76b9;transform:scaleX(0.9800);">(4,024)</span>
<span style="left:64.50px;top:355.36px;font-size:6.6px;line-height:7.92px;color:#2b76b9;transform:scaleX(0.9411);">COGS_Placeholder1</span>
<span style="left:175.80px;top:355.36px;font-size:6.6px;line-height:7.92px;color:#2b76b9;transform:scaleX(0.9447);">as % of Total Revenue, $</span>
<span style="left:280.33px;top:355.36px;font-size:6.6px;line-height:7.92px;color:#2b76b9;transform:scaleX(0.9800);">(700)</span>
<span style="left:326.26px;top:355.36px;font-size:6.6px;line-height:7.92px;color:#2b76b9;transform:scaleX(0.9800);">(703)</span>
<span style="left:372.19px;top:355.36px;font-size:6.6px;line-height:7.92px;color:#2b76b9;transform:scaleX(0.9800);">(703)</span>
<span style="left:418.12px;top:355.36px;font-size:6.6px;line-height:7.92px;color:#2b76b9;transform:scaleX(0.9800);">(703)</span>
<span style="left:464.05px;top:355.36px;font-size:6.6px;line-height:7.92px;color:#2b76b9;transform:scaleX(0.9800);">(703)</span>
<span style="left:509.98px;top:355.36px;font-size:6.6px;line-height:7.92px;color:#2b76b9;transform:scaleX(0.9800);">(703)</span>
<span style="left:555.91px;top:355.36px;font-size:6.6px;line-height:7.92px;color:#2b76b9;transform:scaleX(0.9800);">(703)</span>
<span style="left:601.84px;top:355.36px;font-size:6.6px;line-height:7.92px;color:#2b76b9;transform:scaleX(0.9800);">(703)</span>
<span style="left:647.77px;top:355.36px;font-size:6.6px;line-height:7.92px;color:#2b76b9;transform:scaleX(0.9800);">(703)</span>
<span style="left:693.70px;top:355.36px;font-size:6.6px;line-height:7.92px;color:#2b76b9;transform:scaleX(0.9800);">(703)</span>
<span style="left:739.63px;top:355.36px;font-size:6.6px;line-height:7.92px;color:#2b76b9;transform:scaleX(0.9800);">(703)</span>
<span style="left:785.56px;top:355.36px;font-size:6.6px;line-height:7.92px;color:#2b76b9;transform:scaleX(0.9800);">(703)</span>
<span style="left:831.49px;top:355.36px;font-size:6.6px;line-height:7.92px;color:#2b76b9;transform:scaleX(0.9800);">(706)</span>
<span style="left:877.42px;top:355.36px;font-size:6.6px;line-height:7.92px;color:#2b76b9;transform:scaleX(0.9800);">(706)</span>
<span style="left:923.35px;top:355.36px;font-size:6.6px;line-height:7.92px;color:#2b76b9;transform:scaleX(0.9800);">(706)</span>
<span style="left:969.28px;top:355.36px;font-size:6.6px;line-height:7.92px;color:#2b76b9;transform:scaleX(0.9800);">(706)</span>
<span style="left:1015.21px;top:355.36px;font-size:6.6px;line-height:7.92px;color:#2b76b9;transform:scaleX(0.9800);">(706)</span>
<span style="left:64.50px;top:368.16px;font-size:6.6px;line-height:7.92px;color:#2b76b9;transform:scaleX(0.9411);">COGS_Placeholder2</span>
<span style="left:175.80px;top:368.16px;font-size:6.6px;line-height:7.92px;color:#2b76b9;transform:scaleX(0.9447);">as % of Total Revenue, $</span>
<span style="left:280.33px;top:368.16px;font-size:6.6px;line-height:7.92px;color:#2b76b9;transform:scaleX(0.9800);">(125)</span>
<span style="left:326.26px;top:368.16px;font-size:6.6px;line-height:7.92px;color:#2b76b9;transform:scaleX(0.9800);">(125)</span>
<span style="left:372.19px;top:368.16px;font-size:6.6px;line-height:7.92px;color:#2b76b9;transform:scaleX(0.9800);">(125)</span>
<span style="left:418.12px;top:368.16px;font-size:6.6px;line-height:7.92px;color:#2b76b9;transform:scaleX(0.9800);">(125)</span>
<span style="left:464.05px;top:368.16px;font-size:6.6px;line-height:7.92px;color:#2b76b9;transform:scaleX(0.9800);">(125)</span>
<span style="left:509.98px;top:368.16px;font-size:6.6px;line-height:7.92px;color:#2b76b9;transform:scaleX(0.9800);">(125)</span>
<span style="left:555.91px;top:368.16px;font-size:6.6px;line-height:7.92px;color:#2b76b9;transform:scaleX(0.9800);">(125)</span>
<span style="left:601.84px;top:368.16px;font-size:6.6px;line-height:7.92px;color:#2b76b9;transform:scaleX(0.9800);">(125)</span>
<span style="left:647.77px;top:368.16px;font-size:6.6px;line-height:7.92px;color:#2b76b9;transform:scaleX(0.9800);">(125)</span>
<span style="left:693.70px;top:368.16px;font-size:6.6px;line-height:7.92px;color:#2b76b9;transform:scaleX(0.9800);">(125)</span>
<span style="left:739.63px;top:368.16px;font-size:6.6px;line-height:7.92px;color:#2b76b9;transform:scaleX(0.9800);">(125)</span>
<span style="left:785.56px;top:368.16px;font-size:6.6px;line-height:7.92px;color:#2b76b9;transform:scaleX(0.9800);">(125)</span>
<span style="left:831.49px;top:368.16px;font-size:6.6px;line-height:7.92px;color:#2b76b9;transform:scaleX(0.9800);">(125)</span>
<span style="left:877.42px;top:368.16px;font-size:6.6px;line-height:7.92px;color:#2b76b9;transform:scaleX(0.9800);">(125)</span>
<span style="left:923.35px;top:368.16px;font-size:6.6px;line-height:7.92px;color:#2b76b9;transform:scaleX(0.9800);">(125)</span>
<span style="left:969.28px;top:368.16px;font-size:6.6px;line-height:7.92px;color:#2b76b9;transform:scaleX(0.9800);">(125)</span>
<span style="left:1015.21px;top:368.16px;font-size:6.6px;line-height:7.92px;color:#2b76b9;transform:scaleX(0.9800);">(125)</span>
<span style="left:64.50px;top:380.95px;font-size:6.6px;line-height:7.92px;color:#2b76b9;transform:scaleX(0.9411);">COGS_Placeholder3</span>
<span style="left:175.80px;top:380.95px;font-size:6.6px;line-height:7.92px;color:#2b76b9;transform:scaleX(0.9447);">as % of Total Revenue, $</span>
<span style="left:283.93px;top:380.95px;font-size:6.6px;line-height:7.92px;color:#2b76b9;transform:scaleX(0.9800);">(65)</span>
<span style="left:329.86px;top:380.95px;font-size:6.6px;line-height:7.92px;color:#2b76b9;transform:scaleX(0.9800);">(65)</span>
<span style="left:375.79px;top:380.95px;font-size:6.6px;line-height:7.92px;color:#2b76b9;transform:scaleX(0.9800);">(65)</span>
<span style="left:421.72px;top:380.95px;font-size:6.6px;line-height:7.92px;color:#2b76b9;transform:scaleX(0.9800);">(65)</span>
<span style="left:467.65px;top:380.95px;font-size:6.6px;line-height:7.92px;color:#2b76b9;transform:scaleX(0.9800);">(65)</span>
<span style="left:513.58px;top:380.95px;font-size:6.6px;line-height:7.92px;color:#2b76b9;transform:scaleX(0.9800);">(65)</span>
<span style="left:559.51px;top:380.95px;font-size:6.6px;line-height:7.92px;color:#2b76b9;transform:scaleX(0.9800);">(65)</span>
<span style="left:605.44px;top:380.95px;font-size:6.6px;line-height:7.92px;color:#2b76b9;transform:scaleX(0.9800);">(65)</span>
<span style="left:651.37px;top:380.95px;font-size:6.6px;line-height:7.92px;color:#2b76b9;transform:scaleX(0.9800);">(65)</span>
<span style="left:697.30px;top:380.95px;font-size:6.6px;line-height:7.92px;color:#2b76b9;transform:scaleX(0.9800);">(65)</span>
<span style="left:743.23px;top:380.95px;font-size:6.6px;line-height:7.92px;color:#2b76b9;transform:scaleX(0.9800);">(65)</span>
<span style="left:789.16px;top:380.95px;font-size:6.6px;line-height:7.92px;color:#2b76b9;transform:scaleX(0.9800);">(65)</span>
<span style="left:835.09px;top:380.95px;font-size:6.6px;line-height:7.92px;color:#2b76b9;transform:scaleX(0.9800);">(65)</span>
<span style="left:881.02px;top:380.95px;font-size:6.6px;line-height:7.92px;color:#2b76b9;transform:scaleX(0.9800);">(65)</span>
<span style="left:926.95px;top:380.95px;font-size:6.6px;line-height:7.92px;color:#2b76b9;transform:scaleX(0.9800);">(65)</span>
<span style="left:972.88px;top:380.95px;font-size:6.6px;line-height:7.92px;color:#2b76b9;transform:scaleX(0.9800);">(65)</span>
<span style="left:1018.81px;top:380.95px;font-size:6.6px;line-height:7.92px;color:#2b76b9;transform:scaleX(0.9800);">(65)</span>
<span style="left:64.50px;top:393.75px;font-size:6.6px;line-height:7.92px;color:#2b76b9;transform:scaleX(0.9411);">COGS_Placeholder4</span>
<span style="left:175.80px;top:393.75px;font-size:6.6px;line-height:7.92px;color:#2b76b9;transform:scaleX(0.9447);">as % of Total Revenue, $</span>
<span style="left:283.74px;top:393.75px;font-size:6.6px;line-height:7.92px;color:#2b76b9;transform:scaleX(0.9000);">-</span>
<span style="left:329.67px;top:393.75px;font-size:6.6px;line-height:7.92px;color:#2b76b9;transform:scaleX(0.9000);">-</span>
<span style="left:375.60px;top:393.75px;font-size:6.6px;line-height:7.92px;color:#2b76b9;transform:scaleX(0.9000);">-</span>
<span style="left:421.53px;top:393.75px;font-size:6.6px;line-height:7.92px;color:#2b76b9;transform:scaleX(0.9000);">-</span>
<span style="left:467.46px;top:393.75px;font-size:6.6px;line-height:7.92px;color:#2b76b9;transform:scaleX(0.9000);">-</span>
<span style="left:513.39px;top:393.75px;font-size:6.6px;line-height:7.92px;color:#2b76b9;transform:scaleX(0.9000);">-</span>
<span style="left:559.32px;top:393.75px;font-size:6.6px;line-height:7.92px;color:#2b76b9;transform:scaleX(0.9000);">-</span>
<span style="left:605.25px;top:393.75px;font-size:6.6px;line-height:7.92px;color:#2b76b9;transform:scaleX(0.9000);">-</span>
<span style="left:651.18px;top:393.75px;font-size:6.6px;line-height:7.92px;color:#2b76b9;transform:scaleX(0.9000);">-</span>
<span style="left:697.11px;top:393.75px;font-size:6.6px;line-height:7.92px;color:#2b76b9;transform:scaleX(0.9000);">-</span>
<span style="left:743.04px;top:393.75px;font-size:6.6px;line-height:7.92px;color:#2b76b9;transform:scaleX(0.9000);">-</span>
<span style="left:788.97px;top:393.75px;font-size:6.6px;line-height:7.92px;color:#2b76b9;transform:scaleX(0.9000);">-</span>
<span style="left:834.90px;top:393.75px;font-size:6.6px;line-height:7.92px;color:#2b76b9;transform:scaleX(0.9000);">-</span>
<span style="left:880.83px;top:393.75px;font-size:6.6px;line-height:7.92px;color:#2b76b9;transform:scaleX(0.9000);">-</span>
<span style="left:926.76px;top:393.75px;font-size:6.6px;line-height:7.92px;color:#2b76b9;transform:scaleX(0.9000);">-</span>
<span style="left:972.69px;top:393.75px;font-size:6.6px;line-height:7.92px;color:#2b76b9;transform:scaleX(0.9000);">-</span>
<span style="left:1018.62px;top:393.75px;font-size:6.6px;line-height:7.92px;color:#2b76b9;transform:scaleX(0.9000);">-</span>
<span style="left:64.50px;top:406.54px;font-size:6.6px;line-height:7.92px;color:#2b76b9;transform:scaleX(0.9411);">COGS_Placeholder5</span>
<span style="left:175.80px;top:406.54px;font-size:6.6px;line-height:7.92px;color:#2b76b9;transform:scaleX(0.9447);">as % of Total Revenue, $</span>
<span style="left:283.74px;top:406.54px;font-size:6.6px;line-height:7.92px;color:#2b76b9;transform:scaleX(0.9000);">-</span>
<span style="left:329.67px;top:406.54px;font-size:6.6px;line-height:7.92px;color:#2b76b9;transform:scaleX(0.9000);">-</span>
<span style="left:375.60px;top:406.54px;font-size:6.6px;line-height:7.92px;color:#2b76b9;transform:scaleX(0.9000);">-</span>
<span style="left:421.53px;top:406.54px;font-size:6.6px;line-height:7.92px;color:#2b76b9;transform:scaleX(0.9000);">-</span>
<span style="left:467.46px;top:406.54px;font-size:6.6px;line-height:7.92px;color:#2b76b9;transform:scaleX(0.9000);">-</span>
<span style="left:513.39px;top:406.54px;font-size:6.6px;line-height:7.92px;color:#2b76b9;transform:scaleX(0.9000);">-</span>
<span style="left:559.32px;top:406.54px;font-size:6.6px;line-height:7.92px;color:#2b76b9;transform:scaleX(0.9000);">-</span>
<span style="left:605.25px;top:406.54px;font-size:6.6px;line-height:7.92px;color:#2b76b9;transform:scaleX(0.9000);">-</span>
<span style="left:651.18px;top:406.54px;font-size:6.6px;line-height:7.92px;color:#2b76b9;transform:scaleX(0.9000);">-</span>
<span style="left:697.11px;top:406.54px;font-size:6.6px;line-height:7.92px;color:#2b76b9;transform:scaleX(0.9000);">-</span>
<span style="left:743.04px;top:406.54px;font-size:6.6px;line-height:7.92px;color:#2b76b9;transform:scaleX(0.9000);">-</span>
<span style="left:788.97px;top:406.54px;font-size:6.6px;line-height:7.92px;color:#2b76b9;transform:scaleX(0.9000);">-</span>
<span style="left:834.90px;top:406.54px;font-size:6.6px;line-height:7.92px;color:#2b76b9;transform:scaleX(0.9000);">-</span>
<span style="left:880.83px;top:406.54px;font-size:6.6px;line-height:7.92px;color:#2b76b9;transform:scaleX(0.9000);">-</span>
<span style="left:926.76px;top:406.54px;font-size:6.6px;line-height:7.92px;color:#2b76b9;transform:scaleX(0.9000);">-</span>
<span style="left:972.69px;top:406.54px;font-size:6.6px;line-height:7.92px;color:#2b76b9;transform:scaleX(0.9000);">-</span>
<span style="left:1018.62px;top:406.54px;font-size:6.6px;line-height:7.92px;color:#2b76b9;transform:scaleX(0.9000);">-</span>
<span style="left:64.50px;top:419.34px;font-size:6.6px;line-height:7.92px;color:#2b76b9;transform:scaleX(1.0125);font-weight:bold;">Total COGS</span>
<span style="left:275.15px;top:419.34px;font-size:6.6px;line-height:7.92px;color:#2b76b9;transform:scaleX(0.9700);font-weight:bold;">(4,540)</span>
<span style="left:321.08px;top:419.34px;font-size:6.6px;line-height:7.92px;color:#2b76b9;transform:scaleX(0.9700);font-weight:bold;">(4,726)</span>
<span style="left:367.01px;top:419.34px;font-size:6.6px;line-height:7.92px;color:#2b76b9;transform:scaleX(0.9700);font-weight:bold;">(4,726)</span>
<span style="left:412.94px;top:419.34px;font-size:6.6px;line-height:7.92px;color:#2b76b9;transform:scaleX(0.9700);font-weight:bold;">(4,726)</span>
<span style="left:458.87px;top:419.34px;font-size:6.6px;line-height:7.92px;color:#2b76b9;transform:scaleX(0.9700);font-weight:bold;">(4,726)</span>
<span style="left:504.80px;top:419.34px;font-size:6.6px;line-height:7.92px;color:#2b76b9;transform:scaleX(0.9700);font-weight:bold;">(4,726)</span>
<span style="left:550.73px;top:419.34px;font-size:6.6px;line-height:7.92px;color:#2b76b9;transform:scaleX(0.9700);font-weight:bold;">(4,726)</span>
<span style="left:596.66px;top:419.34px;font-size:6.6px;line-height:7.92px;color:#2b76b9;transform:scaleX(0.9700);font-weight:bold;">(4,726)</span>
<span style="left:642.59px;top:419.34px;font-size:6.6px;line-height:7.92px;color:#2b76b9;transform:scaleX(0.9700);font-weight:bold;">(4,726)</span>
<span style="left:688.52px;top:419.34px;font-size:6.6px;line-height:7.92px;color:#2b76b9;transform:scaleX(0.9700);font-weight:bold;">(4,726)</span>
<span style="left:734.45px;top:419.34px;font-size:6.6px;line-height:7.92px;color:#2b76b9;transform:scaleX(0.9700);font-weight:bold;">(4,726)</span>
<span style="left:780.38px;top:419.34px;font-size:6.6px;line-height:7.92px;color:#2b76b9;transform:scaleX(0.9700);font-weight:bold;">(4,726)</span>
<span style="left:826.31px;top:419.34px;font-size:6.6px;line-height:7.92px;color:#2b76b9;transform:scaleX(0.9700);font-weight:bold;">(4,920)</span>
<span style="left:872.24px;top:419.34px;font-size:6.6px;line-height:7.92px;color:#2b76b9;transform:scaleX(0.9700);font-weight:bold;">(4,920)</span>
<span style="left:918.17px;top:419.34px;font-size:6.6px;line-height:7.92px;color:#2b76b9;transform:scaleX(0.9700);font-weight:bold;">(4,920)</span>
<span style="left:964.10px;top:419.34px;font-size:6.6px;line-height:7.92px;color:#2b76b9;transform:scaleX(0.9700);font-weight:bold;">(4,920)</span>
<span style="left:1010.03px;top:419.34px;font-size:6.6px;line-height:7.92px;color:#2b76b9;transform:scaleX(0.9700);font-weight:bold;">(4,920)</span>
<svg style="left:802.06px;top:340.13px" width="4" height="4" viewBox="0 0 4 4"><path d="M0 0H3.6L0 3.6Z" fill="#1e7a3e"/></svg>
<svg style="left:802.06px;top:352.93px" width="4" height="4" viewBox="0 0 4 4"><path d="M0 0H3.6L0 3.6Z" fill="#1e7a3e"/></svg>
<svg style="left:802.06px;top:365.72px" width="4" height="4" viewBox="0 0 4 4"><path d="M0 0H3.6L0 3.6Z" fill="#1e7a3e"/></svg>
<svg style="left:802.06px;top:378.51px" width="4" height="4" viewBox="0 0 4 4"><path d="M0 0H3.6L0 3.6Z" fill="#1e7a3e"/></svg>
<div style="left:0.00px;top:572.30px;width:1024.00px;height:21.10px;background:#e6e9ee;"></div>
<span style="left:81.00px;top:577.24px;font-size:9.6px;line-height:11.52px;color:#3f3f3f;transform:scaleX(0.8839);">CAPEX 2028</span>
<span style="left:150.00px;top:577.24px;font-size:9.6px;line-height:11.52px;color:#3f3f3f;transform:scaleX(0.9513);">Days Total Hire Sheet 2028</span>
<span style="left:280.50px;top:577.24px;font-size:9.6px;line-height:11.52px;color:#3f3f3f;transform:scaleX(0.9500);">Statements Summary 2028</span>
<span style="left:410.00px;top:577.24px;font-size:9.6px;line-height:11.52px;color:#3f3f3f;transform:scaleX(0.9226);">Revenue Charts</span>
<span style="left:493.00px;top:577.24px;font-size:9.6px;line-height:11.52px;color:#3f3f3f;transform:scaleX(0.9435);">Key Metrics Charts</span>
<span style="left:587.50px;top:577.24px;font-size:9.6px;line-height:11.52px;color:#3f3f3f;transform:scaleX(0.9476);">Hire Charts</span>
<span style="left:651.00px;top:577.24px;font-size:9.6px;line-height:11.52px;color:#3f3f3f;transform:scaleX(0.8329);">BEA</span>
<span style="left:684.50px;top:577.24px;font-size:9.6px;line-height:11.52px;color:#3f3f3f;transform:scaleX(0.8895);">Expenses</span>
<span style="left:838.50px;top:577.24px;font-size:9.6px;line-height:11.52px;color:#3f3f3f;transform:scaleX(0.9371);">Calculations</span>
<div style="left:140.30px;top:577.00px;width:0.80px;height:12.00px;background:#d8dbe0;"></div>
<div style="left:270.30px;top:577.00px;width:0.80px;height:12.00px;background:#d8dbe0;"></div>
<div style="left:400.60px;top:577.00px;width:0.80px;height:12.00px;background:#d8dbe0;"></div>
<div style="left:482.90px;top:577.00px;width:0.80px;height:12.00px;background:#d8dbe0;"></div>
<div style="left:578.00px;top:577.00px;width:0.80px;height:12.00px;background:#d8dbe0;"></div>
<div style="left:642.00px;top:577.00px;width:0.80px;height:12.00px;background:#d8dbe0;"></div>
<div style="left:675.40px;top:577.00px;width:0.80px;height:12.00px;background:#d8dbe0;"></div>
<div style="left:733.50px;top:571.80px;width:92.70px;height:19.00px;background:#ffffff;border-radius:0 0 3px 3px;"></div>
<div style="left:730.50px;top:572.30px;width:3.00px;height:3.00px;background:radial-gradient(circle at 0% 100%,#e6e9ee 2.7px,#fff 3.3px);"></div>
<div style="left:826.20px;top:572.30px;width:3.00px;height:3.00px;background:radial-gradient(circle at 100% 100%,#e6e9ee 2.7px,#fff 3.3px);"></div>
<div style="left:739.00px;top:588.20px;width:81.60px;height:1.50px;background:#479a6d;"></div>
<span style="-webkit-text-stroke:0.4px #2a2a2a;left:739.10px;top:575.64px;font-size:9.6px;line-height:11.52px;color:#2a2a2a;transform:scaleX(0.9536);">COGS Assumptions</span>
<div style="left:730.30px;top:577.50px;width:0.80px;height:11.00px;background:#dcdfe4;"></div>
<div style="left:829.30px;top:577.00px;width:0.80px;height:12.00px;background:#d9dce1;"></div>
<div style="left:896.40px;top:577.00px;width:0.80px;height:12.00px;background:#d0d3d8;"></div>
<svg style="left:15.2px;top:578px" width="8" height="10" viewBox="0 0 8 10"><path d="M5.4 1.6L2 4.75L5.4 7.9" fill="none" stroke="#4a4a4a" stroke-width="0.95"/></svg>
<svg style="left:36.4px;top:578px" width="8" height="10" viewBox="0 0 8 10"><path d="M2.6 1.6L6 4.75L2.6 7.9" fill="none" stroke="#ababab" stroke-width="0.95"/></svg>
<svg style="left:55px;top:578px" width="14" height="10" viewBox="0 0 14 10"><circle cx="3.90" cy="5" r="0.9" fill="#333"/><circle cx="6.50" cy="5" r="0.9" fill="#333"/><circle cx="9.10" cy="5" r="0.9" fill="#333"/></svg>
<div style="left:924.50px;top:582.40px;width:8.40px;height:1.00px;background:#2b2b2b;"></div>
<div style="left:928.20px;top:578.60px;width:1.00px;height:8.60px;background:#2b2b2b;"></div>
<svg style="left:950px;top:576px" width="9" height="14" viewBox="0 0 9 14"><circle cx="4.5" cy="3.90" r="0.85" fill="#333"/><circle cx="4.5" cy="6.80" r="0.85" fill="#333"/><circle cx="4.5" cy="9.70" r="0.85" fill="#333"/></svg>
<div style="left:965.40px;top:576.80px;width:46.40px;height:11.50px;background:#f6f6f6;border-radius:5.75px;"></div>
<div style="left:976.80px;top:579.90px;width:11.00px;height:5.60px;background:#747474;border-radius:2.8px;"></div>
<svg style="left:968.6px;top:579.6px" width="5" height="7" viewBox="0 0 5 7"><path d="M4.4 0.4V6.2L0.4 3.3Z" fill="#555"/></svg>
<svg style="left:1003.8px;top:579.6px" width="5" height="7" viewBox="0 0 5 7"><path d="M0.6 0.4V6.2L4.6 3.3Z" fill="#555"/></svg>
<div style="left:1010.80px;top:52.50px;width:19.20px;height:521.20px;background:#f6f6f7;border-radius:5px 0 0 5px;"></div>
<div style="left:1015.10px;top:63.30px;width:5.60px;height:488.40px;background:#747474;border-radius:2.8px;"></div>
<svg style="left:1014.2px;top:55.2px" width="8" height="5" viewBox="0 0 8 5"><path d="M0.8 4.5L3.7 0.5L6.6 4.5Z" fill="#747474"/></svg>
<svg style="left:1014.2px;top:566.2px" width="8" height="5" viewBox="0 0 8 5"><path d="M0.8 0.3L3.7 4.4L6.6 0.3Z" fill="#747474"/></svg>
<div style="left:0.00px;top:593.40px;width:1024.00px;height:12.60px;background:#f3f3f3;"></div>
<span style="left:7.80px;top:597.88px;font-size:7.2px;line-height:8.64px;color:#505050;transform:scaleX(0.9034);">Ready</span>
<span style="left:73.60px;top:597.68px;font-size:7.2px;line-height:8.64px;color:#2a2a2a;transform:scaleX(0.9404);font-weight:bold;">Accessibility: Investigate</span>
<span style="left:1002.80px;top:597.68px;font-size:7.2px;line-height:8.64px;color:#444;transform:scaleX(0.8689);">100%</span>
<div style="left:918.00px;top:601.00px;width:66.40px;height:0.70px;background:#8a8a8a;"></div>
<div style="left:950.40px;top:597.00px;width:3.00px;height:8.00px;background:#5f5f5f;"></div>
<div style="left:909.70px;top:600.80px;width:4.80px;height:0.80px;background:#8a8a8a;"></div>
<div style="left:987.90px;top:600.90px;width:5.00px;height:0.80px;background:#777;"></div>
<div style="left:990.00px;top:598.60px;width:0.80px;height:5.20px;background:#777;"></div>
<svg style="left:10.00px;top:10.00px;" width="12" height="12" viewBox="0 0 12 12"><rect x="3" y="0.4" width="8.7" height="11.1" rx="0.8" fill="#dcebe2"/><path d="M3 3.2H11.7M3 6H11.7M3 8.8H11.7M7.6 0.4V11.5" stroke="#4f9a70" stroke-width="0.7" fill="none"/><rect x="0.6" y="2.7" width="5.8" height="6.2" rx="0.5" fill="#ffffff"/><path d="M2.2 4.1L4.8 7.6M4.8 4.1L2.2 7.6" stroke="#107c41" stroke-width="0.95" fill="none"/></svg>
<svg style="left:31.00px;top:10.00px;" width="13" height="12" viewBox="0 0 13 12"><path d="M1.4 1H9.6L11.4 2.8V10.9H1.4Z" fill="none" stroke="#fff" stroke-width="0.95" stroke-linejoin="round"/><path d="M3.6 1V4.4H9V1M3.9 10.9V7.6H9V10.9" fill="none" stroke="#fff" stroke-width="0.95"/></svg>
<svg style="left:50.00px;top:9.00px;" width="13" height="14" viewBox="0 0 13 14"><path d="M1.7 2.3V6.3H5.8" fill="none" stroke="#fff" stroke-width="1" /><path d="M1.9 6.1L4.3 3.6C6 1.8 8.6 1.6 10.2 3.2C11.7 4.7 11.6 7.1 10 8.6L5.2 12.3" fill="none" stroke="#fff" stroke-width="1"/></svg>
<svg style="left:65.00px;top:14.00px;" width="5" height="4" viewBox="0 0 5 4"><path d="M0.7 0.9L2.5 2.6L4.3 0.9" fill="none" stroke="#fff" stroke-width="0.9"/></svg>
<svg style="left:75.60px;top:9.00px;opacity:0.38;" width="13" height="14" viewBox="0 0 13 14"><path d="M11.3 2.3V6.3H7.2" fill="none" stroke="#fff" stroke-width="1" /><path d="M11.1 6.1L8.7 3.6C7 1.8 4.4 1.6 2.8 3.2C1.3 4.7 1.4 7.1 3 8.6L7.8 12.3" fill="none" stroke="#fff" stroke-width="1"/></svg>
<svg style="left:90.80px;top:14.00px;opacity:0.38;" width="5" height="4" viewBox="0 0 5 4"><path d="M0.7 0.9L2.5 2.6L4.3 0.9" fill="none" stroke="#fff" stroke-width="0.9"/></svg>
<svg style="left:104.00px;top:13.00px;" width="7" height="6" viewBox="0 0 7 6"><path d="M1 1.1H6" stroke="#fff" stroke-width="0.8"/><path d="M1.6 3.1L3.5 4.7L5.4 3.1" fill="none" stroke="#fff" stroke-width="0.8"/></svg>
<svg style="left:403.00px;top:10.00px;" width="11" height="12" viewBox="0 0 11 12"><circle cx="6.9" cy="4.1" r="3" fill="none" stroke="#2a7049" stroke-width="0.95"/><path d="M4.8 6.3L1.2 10.5" stroke="#2a7049" stroke-width="0.95"/></svg>
<div style="left:941.00px;top:15.10px;width:7.40px;height:0.90px;background:#ffffff;"></div>
<svg style="left:972.20px;top:11.70px;" width="9" height="9" viewBox="0 0 9 9"><rect x="0.9" y="2.1" width="5.2" height="5.2" rx="1.3" fill="none" stroke="#fff" stroke-width="0.85"/><path d="M2.4 1.9C2.5 1.1 3 0.7 3.8 0.7H5.9C7 0.7 7.5 1.2 7.5 2.3V4.4C7.5 5.2 7.1 5.7 6.3 5.8" fill="none" stroke="#fff" stroke-width="0.85"/></svg>
<svg style="left:1004.50px;top:11.80px;" width="9" height="9" viewBox="0 0 9 9"><path d="M0.8 0.7L7.6 7.5M7.6 0.7L0.8 7.5" stroke="#fff" stroke-width="1"/></svg>
<svg style="left:971.50px;top:37.50px;" width="10" height="9" viewBox="0 0 10 9"><path d="M2.4 3.6H0.9V7.8H7.1V5.2" fill="none" stroke="#fff" stroke-width="0.85"/><path d="M2.7 5C3 3.4 3.9 2.6 5.3 2.4" fill="none" stroke="#fff" stroke-width="0.85"/><path d="M5.6 0.9L8.4 3.1L5.9 5.1" fill="none" stroke="#fff" stroke-width="0.85" stroke-linejoin="round"/></svg>
<svg style="left:1009.40px;top:40.40px;" width="6" height="4" viewBox="0 0 6 4"><path d="M1 0.9L2.8 2.6L4.6 0.9" fill="none" stroke="#fff" stroke-width="0.95"/></svg>
<svg style="left:40.00px;top:597.00px;" width="11" height="9" viewBox="0 0 11 9"><path d="M0.8 1H9.4V4M0.8 1V8.6H4.6" fill="none" stroke="#555" stroke-width="0.9"/><path d="M0.8 2.6H9.4" stroke="#555" stroke-width="0.7"/><circle cx="7" cy="6.7" r="2.1" fill="none" stroke="#555" stroke-width="0.8"/><circle cx="7" cy="6.7" r="0.9" fill="#444"/></svg>
<svg style="left:61.00px;top:595.80px;" width="11" height="10.2" viewBox="0 0 11 10.2"><circle cx="4.6" cy="1.6" r="1" fill="none" stroke="#444" stroke-width="0.7"/><path d="M1 3.6L3.6 4.2H5.6L8.2 3.6M3.6 4.2V6.4L2.4 9.8M5.6 4.2V6.2" fill="none" stroke="#444" stroke-width="0.75"/><path d="M5.4 6.6L9.6 10M9.6 6.6L5.4 10" stroke="#444" stroke-width="0.8"/></svg>
<div style="left:826.40px;top:593.40px;width:26.50px;height:12.60px;background:#e0e0e0;"></div>
<svg style="left:834.60px;top:595.80px;" width="10" height="10" viewBox="0 0 10 10"><path d="M0.6 0.6H9.4V9.4H0.6ZM0.6 3.5H9.4M0.6 6.5H9.4M3.5 0.6V9.4M6.5 0.6V9.4" fill="none" stroke="#3c3c3c" stroke-width="0.8"/></svg>
<svg style="left:861.00px;top:596.20px;" width="10" height="9.4" viewBox="0 0 10 9.4"><rect x="0.6" y="0.6" width="8.8" height="8.2" rx="0.8" fill="none" stroke="#5a5a5a" stroke-width="0.8"/><rect x="2.6" y="2" width="4.8" height="5.4" fill="none" stroke="#5a5a5a" stroke-width="0.8"/><path d="M3.8 4.7H6.2" stroke="#5a5a5a" stroke-width="0.8"/></svg>
<svg style="left:888.00px;top:595.80px;" width="10" height="9.4" viewBox="0 0 10 9.4"><rect x="0.6" y="0.7" width="8.9" height="8.1" rx="0.6" fill="none" stroke="#5a5a5a" stroke-width="0.8"/><path d="M0.6 5.2H9.5M5.1 0.7V5.2M3.4 0.7V5.2" fill="none" stroke="#5a5a5a" stroke-width="0.7"/></svg>
</div></body></html>
